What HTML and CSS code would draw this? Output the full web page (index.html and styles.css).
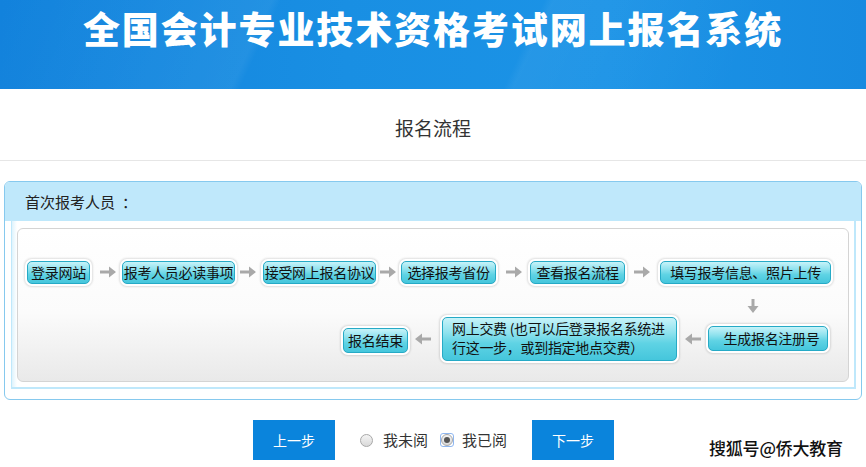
FILE: index.html
```html
<!DOCTYPE html>
<html lang="zh-CN">
<head>
<meta charset="utf-8">
<title>报名流程</title>
<link rel="stylesheet" href="styles.css">
</head>
<body>
<header class="banner">
  <h1 class="banner-title">全国会计专业技术资格考试网上报名系统</h1>
</header>
<div class="subhead">报名流程</div>
<section class="panel">
  <div class="panel-title">首次报考人员<span class="colon">：</span></div>
  <div class="panel-body">
    <div class="panel-white">
      <div class="flow">
        <div class="node n1">登录网站</div>
        <div class="node n2">报考人员必读事项</div>
        <div class="node n3">接受网上报名协议</div>
        <div class="node n4">选择报考省份</div>
        <div class="node n5">查看报名流程</div>
        <div class="node n6">填写报考信息、照片上传</div>
        <div class="node n7">生成报名注册号</div>
        <div class="node n8 multi">网上交费 (也可以后登录报名系统进<br>行这一步，或到指定地点交费）</div>
        <div class="node n9">报名结束</div>

        <svg class="arrow a1" viewBox="0 0 16 12"><path d="M0 4.5H9V0.5L16 6L9 11.5V7.5H0Z"/></svg>
        <svg class="arrow a2" viewBox="0 0 16 12"><path d="M0 4.5H9V0.5L16 6L9 11.5V7.5H0Z"/></svg>
        <svg class="arrow a3" viewBox="0 0 16 12"><path d="M0 4.5H9V0.5L16 6L9 11.5V7.5H0Z"/></svg>
        <svg class="arrow a4" viewBox="0 0 16 12"><path d="M0 4.5H9V0.5L16 6L9 11.5V7.5H0Z"/></svg>
        <svg class="arrow a5" viewBox="0 0 16 12"><path d="M0 4.5H9V0.5L16 6L9 11.5V7.5H0Z"/></svg>
        <svg class="arrow-down ad" viewBox="0 0 12 14"><path d="M4.5 0H7.5V7H11.5L6 14L0.5 7H4.5Z"/></svg>
        <svg class="arrow a6" viewBox="0 0 16 12"><path d="M16 4.5H7V0.5L0 6L7 11.5V7.5H16Z"/></svg>
        <svg class="arrow a7" viewBox="0 0 16 12"><path d="M16 4.5H7V0.5L0 6L7 11.5V7.5H16Z"/></svg>
      </div>
    </div>
  </div>
</section>
<div class="actions">
  <div class="btn">上一步</div>
  <div class="choice first">
    <span class="radio"></span>
    <span class="choice-text">我未阅</span>
  </div>
  <div class="choice second">
    <span class="radio-ring"><span class="radio checked"></span></span>
    <span class="choice-text">我已阅</span>
  </div>
  <div class="btn next">下一步</div>
</div>
<div class="watermark">搜狐号@侨大教育</div>
</body>
</html>
```
FILE: styles.css
```css
* { box-sizing: border-box; }
html, body { margin: 0; padding: 0; background: #fff; }
body {
  width: 866px;
  height: 467px;
  overflow: hidden;
  position: relative;
  font-family: "Noto Sans CJK SC", "Microsoft YaHei", sans-serif;
  color: #333;
}
.banner {
  height: 89px;
  background:
    linear-gradient(115deg, rgba(255,255,255,0) 0%, rgba(255,255,255,0.05) 30%, rgba(255,255,255,0) 31%, rgba(255,255,255,0) 60%, rgba(255,255,255,0.05) 61%, rgba(255,255,255,0) 85%),
    linear-gradient(90deg, #1282dc 0%, #198fe3 40%, #1b93e6 70%, #178ae0 100%);
  padding-top: 6px;
}
.banner-title {
  margin: 0;
  text-align: center;
  color: #fff;
  font-size: 37px;
  line-height: 44px;
  font-weight: 900;
  letter-spacing: 1.9px;
  padding-left: 0;
}
.subhead {
  height: 72px;
  border-bottom: 1px solid #e6e6e6;
  text-align: center;
  font-size: 19px;
  line-height: 20px;
  padding-top: 29px;
  color: #333;
}
.panel {
  margin: 20px 4px 0 4px;
  border: 1px solid #86c9ee;
  border-radius: 6px;
  background: #fff;
  padding-bottom: 10px;
  overflow: hidden;
}
.panel-title {
  height: 39px;
  background: #bfe8fb;
  padding-left: 20px;
  font-size: 15px;
  line-height: 39px;
  color: #222;
}
.colon { margin-left: 7px; }
.panel-body {
  margin: 0 5px 0 6px;
  background: #bfe8fb;
  padding: 0 2px 2px 1px;
}
.panel-white {
  background: linear-gradient(90deg, #dff3fc 0, #fff 5px);
  padding: 7px 5px 5px 5px;
}
.flow {
  position: relative;
  height: 154px;
  border: 1px solid #d4d4d4;
  border-radius: 6px;
  background: linear-gradient(180deg, #ffffff 0%, #fbfbfb 55%, #e9e9e9 100%);
}
.node {
  position: absolute;
  top: 32px;
  height: 23px;
  border: 1px solid #26aac6;
  border-radius: 5px;
  background: linear-gradient(180deg, #c7f3f9 0%, #8fe2ee 35%, #5fd3e4 60%, #45c6dc 100%);
  box-shadow: 0 0 0 2px #fff, 0 0 2px 3px rgba(0,0,0,0.12);
  color: #111;
  font-size: 14px;
  line-height: 21px;
  text-align: center;
  white-space: nowrap;
  letter-spacing: -0.3px;
}
.n1 { left: 9px; width: 63px; }
.n2 { left: 104px; width: 113px; }
.n3 { left: 245px; width: 113px; }
.n4 { left: 383px; width: 95px; }
.n5 { left: 512px; width: 95px; }
.n6 { left: 642px; width: 171px; }
.n7 { left: 690px; top: 97px; width: 120px; height: 25px; line-height: 23px; padding-left: 7px; }
.n8 { left: 424px; top: 88px; width: 235px; height: 44px; }
.n9 { left: 325px; top: 99px; width: 65px; height: 25px; line-height: 23px; }
.multi {
  text-align: left;
  padding: 1px 0 0 9px;
  line-height: 19px;
}
.arrow {
  position: absolute;
  top: 37px;
  width: 16px;
  height: 12px;
  fill: #a9a9a9;
}
.a1 { left: 82px; }
.a2 { left: 222px; }
.a3 { left: 362px; }
.a4 { left: 488px; }
.a5 { left: 616px; }
.a6 { left: 667px; top: 104px; }
.a7 { left: 397px; top: 104px; }
.arrow-down {
  position: absolute;
  width: 12px;
  height: 14px;
  fill: #a9a9a9;
}
.ad { left: 729px; top: 70px; }

.actions {
  margin-top: 20px;
  display: flex;
  justify-content: center;
  align-items: center;
  padding-left: 1px;
}
.btn {
  width: 82px;
  height: 40px;
  background: #0a84dc;
  color: #fff;
  font-size: 14px;
  line-height: 40px;
  text-align: center;
}
.choice {
  display: flex;
  align-items: center;
  font-size: 15px;
  color: #333;
}
.choice.first { margin-left: 25px; }
.choice.first .radio { margin-right: 10px; }
.choice.second { margin-left: 9px; margin-right: 22px; }
.choice.second .radio-ring { margin-right: 8px; }
.choice-text { width: 48px; line-height: 20px; }
.radio {
  display: block;
  width: 13px;
  height: 13px;
  border-radius: 50%;
  border: 1px solid #a8a8a8;
  background: linear-gradient(180deg, #f4f4f4, #d9d9d9);
}
.radio-ring {
  display: flex;
  align-items: center;
  justify-content: center;
  width: 14px;
  height: 14px;
  border: 1px solid #8fb7f0;
  border-radius: 3px;
}
.radio.checked {
  width: 12px;
  height: 12px;
  position: relative;
}
.radio.checked::after {
  content: "";
  position: absolute;
  left: 2px;
  top: 2px;
  width: 6px;
  height: 6px;
  border-radius: 50%;
  background: #555;
}
.watermark {
  position: absolute;
  left: 709px;
  top: 435px;
  font-size: 17px;
  font-weight: 500;
  color: #111;
  letter-spacing: -0.2px;
  text-shadow: 0 0 2px #fff, 0 0 1px #fff;
}
```
